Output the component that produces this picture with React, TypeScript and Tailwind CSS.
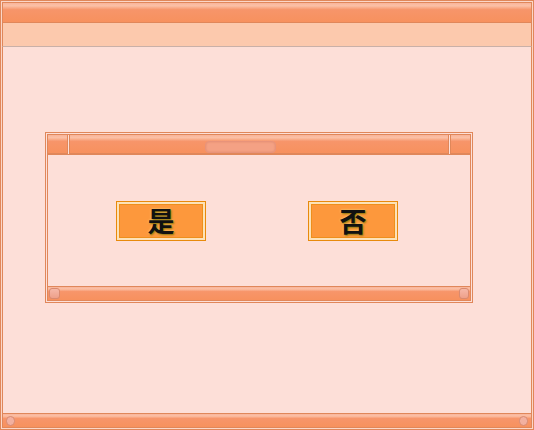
import React from "react";

const bar =
  "bg-[linear-gradient(to_bottom,#f9b49a_0%,#fbc0a6_15%,#f7956a_35%,#f7915e_100%)]";

function Knob({ cls }: { cls: string }) {
  return (
    <div
      className={`${cls} rounded-[3px] border border-[#d98a70] bg-[linear-gradient(to_bottom,#f6b8a8,#eea08a)]`}
    />
  );
}

function Btn({ label }: { label: string }) {
  return (
    <div className="w-[90px] h-[40px] border border-[#e88a0c] bg-[#fde2b8] p-[2px]">
      <div className="w-full h-full border border-[#ee8f1c] bg-[#fd983c] flex items-center justify-center">
        <span
          className="text-[27px] leading-none font-bold text-[#111] [text-shadow:1px_1px_2px_#8a7000,0_0_2px_#fff1a0]"
          style={{ fontFamily: '"Noto Sans CJK SC", "Noto Sans", sans-serif' }}
        >
          {label}
        </span>
      </div>
    </div>
  );
}

export default function App() {
  return (
    <div className="w-[534px] h-[430px] border border-[#e0875a] bg-[#fcd6c8] p-px flex flex-col">
      <div className={`h-[21px] shrink-0 border border-[#e0875a] ${bar}`} />
      <div className="h-[24px] shrink-0 border-x border-[#e0875a] bg-[#fcc9ad] border-b border-b-[#c9b0a8]" />
      <div className="flex-1 border-x border-[#e0875a] bg-[#fddfd8] pl-[42px] pt-[85px]">
        <div className="w-[428px] h-[171px] border border-[#e0875a] p-px flex flex-col">
          <div className="flex-1 border border-[#e0875a] flex flex-col">
            <div className="h-[21px] shrink-0 flex gap-px border-b border-[#e0875a] -mt-px -mx-px">
              <div className={`w-[21px] border border-[#e0875a] ${bar}`} />
              <div className={`flex-1 border border-[#e0875a] ${bar} flex items-start pt-[6px]`}>
                <div className="ml-[135px] w-[71px] h-[12px] rounded-[4px] border border-[#e8937a] bg-[#f4a184] shadow-[inset_0_0_2px_#e08868]" />
              </div>
              <div className={`w-[21px] border border-[#e0875a] ${bar}`} />
            </div>
            <div className="flex-1 flex items-center pl-[68px] gap-[102px]">
              <Btn label="是" />
              <Btn label="否" />
            </div>
            <div
              className={`h-[14px] shrink-0 border-t border-[#e0875a] ${bar} flex items-center justify-between px-[1px]`}
            >
              <Knob cls="w-[11px] h-[11px]" />
              <Knob cls="w-[10px] h-[11px]" />
            </div>
          </div>
        </div>
      </div>
      <div
        className={`h-[15px] shrink-0 border border-[#e0875a] ${bar} flex items-center justify-between px-[3px]`}
      >
        <div className="w-[9px] h-[10px] rounded-full border border-[#d98a70] bg-[#f2b0a0]" />
        <div className="w-[9px] h-[10px] rounded-full border border-[#d98a70] bg-[#f2b0a0]" />
      </div>
    </div>
  );
}
